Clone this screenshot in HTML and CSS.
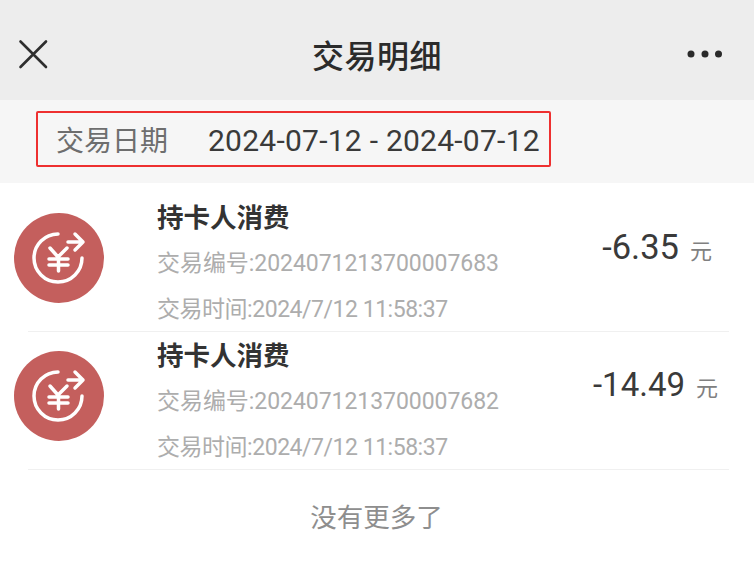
FILE: index.html
```html
<!DOCTYPE html>
<html lang="zh-CN">
<head>
    <meta charset="UTF-8">
    <meta name="viewport" content="width=device-width, initial-scale=1.0">
    <title>交易明细</title>
    <link rel="stylesheet" href="styles.css">
</head>
<body>

    <header class="top-bar">
        <svg class="close-icon" width="30" height="30" viewBox="0 0 30 30">
            <path d="M2.500 2.500L28 28M28 2.500L2.500 28" fill="none" stroke="#2e2e2e" stroke-width="2.600" stroke-linecap="round"/>
        </svg>
        <h1 class="page-title">交易明细</h1>
        <svg class="more-icon" width="36" height="8" viewBox="0 0 36 8">
            <circle cx="4" cy="4" r="3.5" fill="#2a2a2a"/>
            <circle cx="18" cy="4" r="3.5" fill="#2a2a2a"/>
            <circle cx="31.500" cy="4" r="3.5" fill="#2a2a2a"/>
        </svg>
    </header>

    <section class="date-bar">
        <div class="date-box">
            <span class="date-label">交易日期</span>
            <span class="date-range">2024-07-12 - 2024-07-12</span>
        </div>
    </section>

    <main class="list">
        <div class="item">
            <svg class="item-icon" width="90" height="90" viewBox="0 0 90 90">
                <circle cx="45" cy="45" r="45" fill="#c45f5d"/>
                <path d="M44 21A24 24 0 1 0 68 45" fill="none" stroke="#fff" stroke-width="3.500" stroke-linecap="round"/>
                <path d="M54 29H69M61 21L69 29L61 37" fill="none" stroke="#fff" stroke-width="3.500" stroke-linecap="round" stroke-linejoin="round"/>
                <path d="M36 35L44 44L53 35M35 46H54M35 52H54M44.500 44V58" fill="none" stroke="#fff" stroke-width="3.500" stroke-linecap="round" stroke-linejoin="round"/>
            </svg>
            <div class="item-info">
                <div class="item-title">持卡人消费</div>
                <div class="item-sub">交易编号:2024071213700007683</div>
                <div class="item-sub item-time">交易时间:2024/7/12 11:58:37</div>
            </div>
            <div class="item-amount first">-6.35<span class="unit">元</span></div>
        </div>
        <div class="item">
            <svg class="item-icon" width="90" height="90" viewBox="0 0 90 90">
                <circle cx="45" cy="45" r="45" fill="#c45f5d"/>
                <path d="M44 21A24 24 0 1 0 68 45" fill="none" stroke="#fff" stroke-width="3.500" stroke-linecap="round"/>
                <path d="M54 29H69M61 21L69 29L61 37" fill="none" stroke="#fff" stroke-width="3.500" stroke-linecap="round" stroke-linejoin="round"/>
                <path d="M36 35L44 44L53 35M35 46H54M35 52H54M44.500 44V58" fill="none" stroke="#fff" stroke-width="3.500" stroke-linecap="round" stroke-linejoin="round"/>
            </svg>
            <div class="item-info">
                <div class="item-title">持卡人消费</div>
                <div class="item-sub">交易编号:2024071213700007682</div>
                <div class="item-sub item-time">交易时间:2024/7/12 11:58:37</div>
            </div>
            <div class="item-amount">-14.49<span class="unit">元</span></div>
        </div>
    </main>

    <footer class="no-more">没有更多了</footer>

</body>
</html>
```

FILE: styles.css
```css
html, body {
    margin: 0;
    padding: 0;
}

body {
    width: 754px;
    height: 571px;
    overflow: hidden;
    background-color: #fff;
    font-family: Roboto, "Noto Sans CJK SC", sans-serif;
}

.top-bar {
    height: 100px;
    box-sizing: border-box;
    padding: 8px 18px 0;
    display: grid;
    grid-template-columns: 1fr auto 1fr;
    align-items: center;
    background-color: #ededed;
}

.more-icon {
    justify-self: end;
    margin-right: 13px;
}

.page-title {
    margin: 0;
    font-size: 32px;
    letter-spacing: 0.5px;
    font-weight: 500;
    color: #2b2b2b;
}

.date-bar {
    height: 83px;
    box-sizing: border-box;
    padding: 11px 0 0 36px;
    background-color: #f6f6f6;
}

.date-box {
    width: 515px;
    height: 56px;
    box-sizing: border-box;
    padding-left: 18px;
    display: flex;
    align-items: center;
    border: 2px solid #ee3030;
    border-radius: 2px;
}

.date-label {
    width: 152px;
    font-size: 28px;
    color: #6e6e6e;
}

.date-range {
    padding-top: 2px;
    font-size: 30px;
    letter-spacing: 0.25px;
    color: #3a3a3a;
    white-space: nowrap;
}

.list {
    padding-left: 14px;
}

.item {
    height: 138px;
    box-sizing: border-box;
    display: flex;
    align-items: flex-start;
    position: relative;
}

.item:first-child {
    height: 149px;
    padding-top: 11px;
}

.item::after {
    content: "";
    position: absolute;
    left: 14px;
    right: 25px;
    bottom: 0;
    border-bottom: 1px solid #f0f0f0;
}

.item-icon {
    flex: none;
    margin-top: 19px;
}

.item-info {
    margin: 1px 0 0 53px;
    flex: 1;
}

.item-title {
    font-size: 26.500px;
    line-height: 46px;
    font-weight: 700;
    color: #333;
}

.item-sub {
    font-size: 23px;
    letter-spacing: -0.05px;
    line-height: 46px;
    color: #adadad;
    white-space: nowrap;
}

.item-time {
    letter-spacing: -0.47px;
}

.item-amount {
    margin: 33px 36px 0 0;
    font-size: 33px;
    line-height: 40px;
    color: #3a3a3a;
    white-space: nowrap;
}

.item-amount.first {
    margin-right: 42px;
    font-size: 34.500px;
}

.unit {
    margin-left: 11px;
    font-size: 22px;
    color: #808080;
}

.no-more {
    margin-top: 26px;
    padding-right: 1px;
    text-align: center;
    font-size: 26.500px;
    color: #8e8e8e;
}
```
